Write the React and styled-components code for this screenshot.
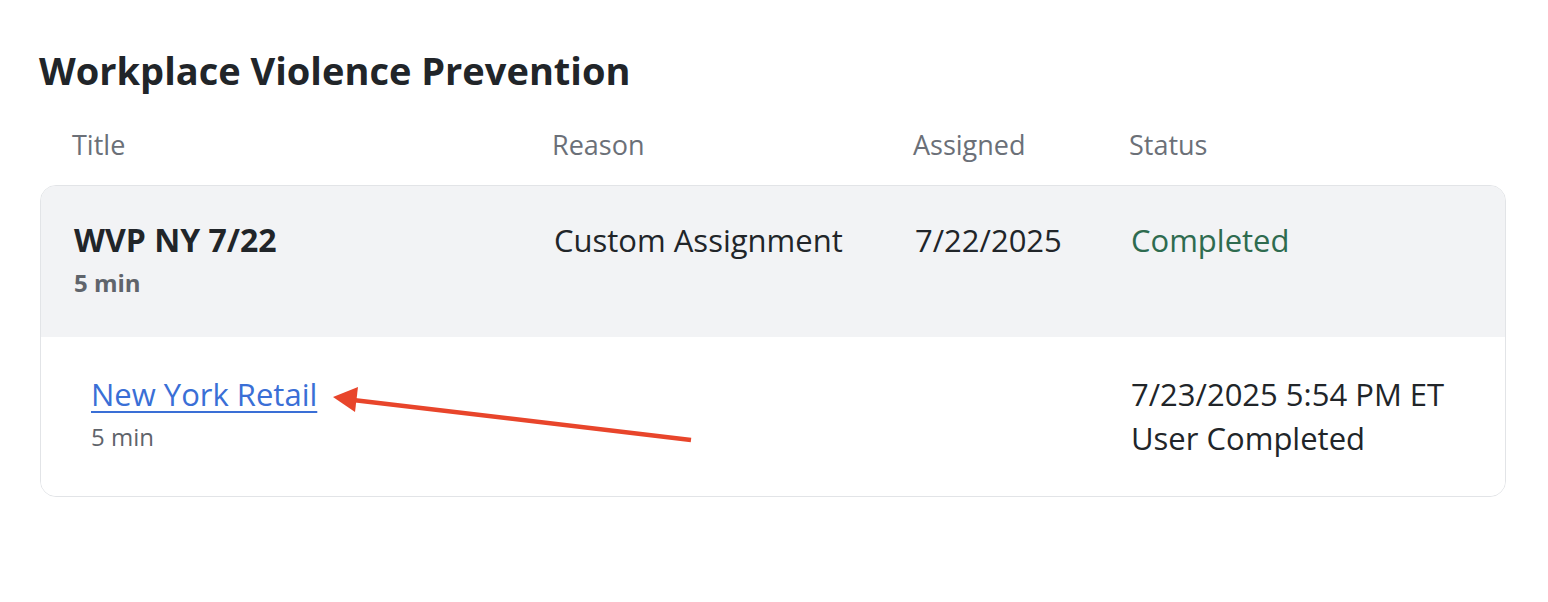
import React from "react";
import styled, { createGlobalStyle } from "styled-components";

const GlobalStyle = createGlobalStyle`
  body {
    margin: 0;
    background: #ffffff;
    font-family: "Open Sans", Lato, sans-serif;
    color: #212529;
  }
`;

const Page = styled.div`
  padding: 44px 42px 40px 39px;
`;

const Heading = styled.h1`
  margin: 0;
  font-size: 38px;
  font-weight: 700;
  line-height: 52px;
  color: #212529;
`;

const cols = "480px 361px 216px 1fr";

const HeaderRow = styled.div`
  display: grid;
  grid-template-columns: ${cols};
  padding: 31px 0 0 33px;
  height: 89px;
  box-sizing: border-box;
`;

const HeaderCell = styled.div`
  font-size: 27px;
  line-height: 36px;
  color: #6b7078;
`;

const Card = styled.div`
  border: 1.5px solid #e2e4e7;
  border-radius: 16px;
  overflow: hidden;
  margin-left: 1px;
`;

const Row = styled.div`
  display: grid;
  grid-template-columns: ${cols};
  padding: ${(p) => p.$pad};
  background: ${(p) => (p.$shaded ? "#f2f3f5" : "#ffffff")};
  height: ${(p) => p.$height}px;
  box-sizing: border-box;
  position: relative;
`;

const Cell = styled.div`
  font-size: 31px;
  line-height: 44px;
  color: ${(p) => p.$color || "#212529"};
  padding-left: ${(p) => p.$indent || 0}px;
`;

const Name = styled.div`
  font-size: 32px;
  font-weight: 700;
  line-height: 44px;
`;

const Meta = styled.div`
  font-size: 24px;
  line-height: 30px;
  margin-top: 6px;
  color: #5f646b;
  font-weight: ${(p) => (p.$bold ? 700 : 400)};
`;

const Link = styled.a`
  font-size: 31px;
  line-height: 44px;
  color: #3a6fd6;
  text-decoration: underline;
  text-underline-offset: 5px;
  text-decoration-thickness: 2px;
`;

const Arrow = styled.svg`
  position: absolute;
  left: 0;
  top: 0;
  pointer-events: none;
`;

export default function App() {
  return (
    <>
      <GlobalStyle />
      <Page>
        <Heading>Workplace Violence Prevention</Heading>
        <HeaderRow>
          <HeaderCell>Title</HeaderCell>
          <HeaderCell>Reason</HeaderCell>
          <HeaderCell>Assigned</HeaderCell>
          <HeaderCell>Status</HeaderCell>
        </HeaderRow>
        <Card>
          <Row $shaded $height={151} $pad="32px 0 0 33px">
            <div>
              <Name>WVP NY 7/22</Name>
              <Meta $bold>5 min</Meta>
            </div>
            <Cell>Custom Assignment</Cell>
            <Cell>7/22/2025</Cell>
            <Cell $color="#2e6b4f">Completed</Cell>
          </Row>
          <Row $height={159} $pad="35px 0 0 33px">
            <Cell $indent={17}>
              <Link href="#">New York Retail</Link>
              <Meta>5 min</Meta>
            </Cell>
            <div />
            <div />
            <Cell>
              7/23/2025 5:54 PM ET
              <br />
              User Completed
            </Cell>
            <Arrow width="700" height="159" viewBox="0 0 700 159">
              <line x1="650" y1="103" x2="312" y2="63" stroke="#e8452b" strokeWidth="4.5" />
              <polygon points="292,60 317,50 314,75" fill="#e8452b" />
            </Arrow>
          </Row>
        </Card>
      </Page>
    </>
  );
}
